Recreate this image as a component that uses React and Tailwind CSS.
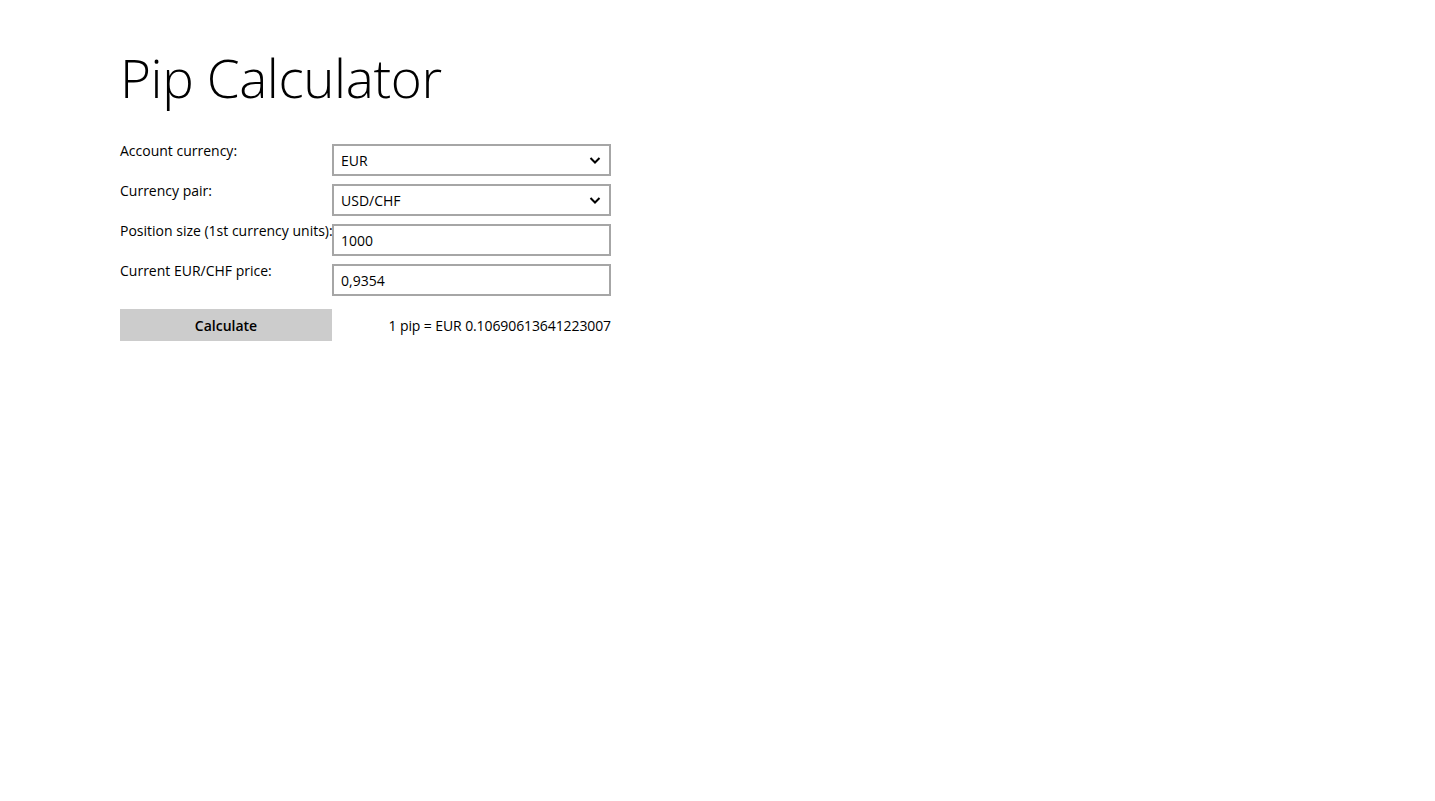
import { useState } from "react";

const Chevron = () => (
  <svg className="h-3 w-3 shrink-0" viewBox="0 0 12 12" fill="none" aria-hidden="true">
    <path d="M1.5 4l4.5 4.5L10.5 4" stroke="#000" strokeWidth="2" />
  </svg>
);

function Row({ label, children }) {
  return (
    <div className="flex items-start h-8">
      <div className="w-[212px] shrink-0 -mt-[3px] leading-[20px] text-[14px] whitespace-nowrap">{label}</div>
      {children}
    </div>
  );
}

function Select({ value }) {
  return (
    <div className="flex items-center justify-between h-8 w-[279px] border-2 border-[#a6a6a6] pl-[7px] pr-[8px] text-[14px]">
      <span>{value}</span>
      <Chevron />
    </div>
  );
}

function Field({ value, onChange }) {
  return (
    <input
      value={value}
      onChange={(e) => onChange(e.target.value)}
      className="h-8 w-[279px] border-2 border-[#a6a6a6] px-[7px] text-[14px] outline-none"
    />
  );
}

export default function App() {
  const [size, setSize] = useState("1000");
  const [price, setPrice] = useState("0,9354");

  return (
    <div className="min-h-screen bg-white text-black font-['Open_Sans',sans-serif] pl-[120px] pt-[42px]">
      <h1 className="text-[53px] font-light leading-[72px] tracking-[-0.4px]">Pip Calculator</h1>
      <div className="mt-[30px] flex flex-col gap-2 w-[492px]">
        <Row label="Account currency:">
          <Select value="EUR" />
        </Row>
        <Row label="Currency pair:">
          <Select value="USD/CHF" />
        </Row>
        <Row label="Position size (1st currency units):">
          <Field value={size} onChange={setSize} />
        </Row>
        <Row label="Current EUR/CHF price:">
          <Field value={price} onChange={setPrice} />
        </Row>
        <div className="mt-[5px] flex items-center h-8">
          <button className="h-8 w-[212px] bg-[#cccccc] text-[14px] font-semibold">Calculate</button>
          <div className="w-[279px] text-right text-[14px] tracking-[-0.1px]">1 pip = EUR 0.10690613641223007</div>
        </div>
      </div>
    </div>
  );
}
